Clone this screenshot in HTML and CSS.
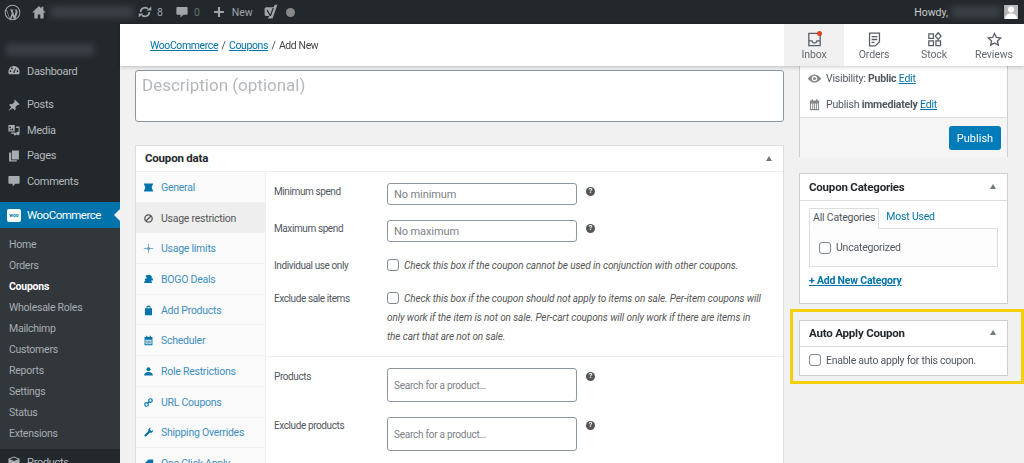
FILE: index.html
```html
<!DOCTYPE html>
<html lang="en">
<head>
<meta charset="utf-8">
<title>Add New Coupon</title>
<link rel="stylesheet" href="styles.css">
</head>
<body>
<div class="page">
  <header class="adminbar">
    <svg class="ab-wp" viewBox="0 0 20 20"><circle cx="10" cy="10" r="8.600" fill="none" stroke="currentColor" stroke-width="1.200"/><path fill="currentColor" d="M3.400 7.200l3.600 9.800 2.100-5.900-1.300-3.700H6.800V6.500h4.400v.9h-1.100l2.200 6.300 1.100-3.500c.5-1.700-.2-2.600-.7-3.700h2.100c1.200 1.800 1.400 3.400.7 5.400l-2.500 7-.9.200-2-5.400-1.900 5.400-.9-.2L2.400 7.200z"/></svg>
    <svg class="ab-home" viewBox="0 0 20 20"><path fill="currentColor" d="M10 2.500L1.500 10.500h2.700V18h4.200v-5h3.200v5h4.200v-7.500h2.700l-3-2.800V3.500h-2.400v2z"/></svg>
    <span class="blur ab-site"></span>
    <svg class="ab-update" viewBox="0 0 20 20"><path fill="none" stroke="currentColor" stroke-width="2.400" d="M3.800 10a6.200 6.200 0 0 1 10.600-4.400M16.200 10a6.200 6.200 0 0 1-10.600 4.400"/><path fill="currentColor" d="M12.500 8H19V2zM7.500 12H1v6z"/></svg>
    <span class="ab-num">8</span>
    <svg class="ab-comment" viewBox="0 0 20 20"><path fill="currentColor" d="M3 3h14a1 1 0 0 1 1 1v9a1 1 0 0 1-1 1h-5l-4 4v-4H3a1 1 0 0 1-1-1V4a1 1 0 0 1 1-1z"/></svg>
    <span class="ab-num ab-dim">0</span>
    <svg class="ab-plus" viewBox="0 0 20 20"><path fill="currentColor" d="M8.500 3h3v5.500H17v3h-5.500V17h-3v-5.500H3v-3h5.500z"/></svg>
    <span class="ab-new">New</span>
    <svg class="ab-yoast" viewBox="0 0 20 20"><path fill="currentColor" d="M4 4h9l2-3h3l-6 17H6l2-3H4a2 2 0 0 1-2-2V6a2 2 0 0 1 2-2z"/><path fill="#23282d" d="M5.500 7l3.500 6 3-8h1.500L10 15H8.500L4.500 8z"/></svg>
    <span class="ab-dot"></span>
    <span class="ab-spacer"></span>
    <span class="ab-howdy">Howdy,</span>
    <span class="blur ab-user"></span>
    <span class="ab-avatar"><svg viewBox="0 0 14 14"><circle cx="7" cy="4.500" r="3" fill="#fff"/><path fill="#fff" d="M1 14c0-4 2.500-5.500 6-5.500s6 1.500 6 5.500z"/></svg></span>
  </header>

  <div class="shell">
    <nav class="sidebar">
      <div class="brand"><span class="blur brand-blur"></span></div>
      <a class="menu-item menu-first"><svg viewBox="0 0 20 20"><path fill="currentColor" d="M10 3a8 8 0 0 0-7.200 11.500h14.400A8 8 0 0 0 10 3zm-5 8.500a1.200 1.200 0 1 1 0-2.400 1.200 1.200 0 0 1 0 2.400zm2-4a1.200 1.200 0 1 1 0-2.400 1.200 1.200 0 0 1 0 2.400zM10.500 13a1.500 1.500 0 0 1-1.400-2l3-5 .8.400-2 5.200c.3.900-.1 1.400-.4 1.400zm4.500-1.500a1.200 1.200 0 1 1 0-2.400 1.200 1.200 0 0 1 0 2.400z"/></svg>Dashboard</a>
      <div class="menu-sep"></div>
      <a class="menu-item"><svg viewBox="0 0 20 20"><path fill="currentColor" d="M11 2l7 7-1.500 1-1-.5-3.500 3.500.5 3-1.500 1.500-3-3L3 18l-.5-.5 3.500-4.500-3-3 1.500-1.500 3 .5L11 5.500l-.5-1z"/></svg>Posts</a>
      <a class="menu-item"><svg viewBox="0 0 20 20"><path fill="currentColor" d="M2 3h9v9H2zm2.500 2a1.200 1.200 0 1 0 0 2.400 1.200 1.200 0 0 0 0-2.400zM3.500 10.500h6L8 7.500l-2 2-1-1zM13 5h5v10a2.500 2.500 0 1 1-1.500-2.200V7H13zM6 13.500h5a2 2 0 1 1-1 3.700 3 3 0 0 1-.2-1.700H6z"/></svg>Media</a>
      <a class="menu-item"><svg viewBox="0 0 20 20"><path fill="currentColor" d="M7 2h10v13H7zM3 5h3v11h8v2H3z"/></svg>Pages</a>
      <a class="menu-item"><svg viewBox="0 0 20 20"><path fill="currentColor" d="M3 3h14a1 1 0 0 1 1 1v9a1 1 0 0 1-1 1h-5l-4 4v-4H3a1 1 0 0 1-1-1V4a1 1 0 0 1 1-1z"/></svg>Comments</a>
      <a class="menu-item menu-woo"><span class="woo-logo">woo</span>WooCommerce<span class="menu-arrow"></span></a>
      <ul class="submenu">
        <li>Home</li><li>Orders</li><li class="sub-active">Coupons</li><li>Wholesale Roles</li><li>Mailchimp</li><li>Customers</li><li>Reports</li><li>Settings</li><li>Status</li><li>Extensions</li>
      </ul>
      <a class="menu-item menu-products"><svg viewBox="0 0 20 20"><path fill="currentColor" d="M10 2l8 3.500v9L10 18l-8-3.500v-9zM4 6l6 2.500L16 6l-6-2.500z"/></svg>Products</a>
    </nav>

    <div class="main">
      <div class="wc-header">
        <div class="crumbs"><a>WooCommerce</a><span class="crumb-sep">/</span><a>Coupons</a><span class="crumb-sep">/</span><span>Add New</span></div>
        <div class="wc-tabs">
          <div class="wc-tab wc-tab-on"><span class="wc-dot"></span><svg viewBox="0 0 24 24"><path fill="none" stroke="currentColor" stroke-width="1.800" d="M4 3.500h16v17H4zM4 14h4.500c.5 2 1.800 3 3.500 3s3-1 3.500-3H20"/></svg>Inbox</div>
          <div class="wc-tab"><svg viewBox="0 0 24 24"><path fill="none" stroke="currentColor" stroke-width="1.800" d="M5 3h14v12l-6 6H5zM8 8h8M8 12h8M8 16h4"/></svg>Orders</div>
          <div class="wc-tab"><svg viewBox="0 0 24 24"><path fill="none" stroke="currentColor" stroke-width="1.800" d="M4 4h6.500v6.500H4zM4 14h6.500v6.500H4zM14 14h6.500v6.500H14zM17.200 2.500l4 4.700-4 4.700-4-4.700z"/></svg>Stock</div>
          <div class="wc-tab"><svg viewBox="0 0 24 24"><path fill="none" stroke="currentColor" stroke-width="1.800" d="M12 3.500l2.600 5.600 6.100.7-4.500 4.200 1.200 6-5.400-3-5.400 3 1.200-6-4.500-4.200 6.100-.7z"/></svg>Reviews</div>
        </div>
      </div>

      <div class="content">
        <div class="col-main">
          <textarea class="desc" placeholder="Description (optional)"></textarea>
          <section class="coupon-box">
            <div class="box-head coupon-head"><h2>Coupon data</h2><span class="caret"></span></div>
            <div class="coupon-body">
              <ul class="tabs">
                <li><svg viewBox="0 0 14 14"><path fill="#0073aa" d="M1 2h12l-2 5 2 5H1l2-5z"/></svg>General</li>
                <li class="tab-on"><svg viewBox="0 0 14 14"><circle cx="7" cy="7" r="4.700" fill="none" stroke="#555" stroke-width="1.700"/><path stroke="#555" stroke-width="1.700" d="M3.800 10.200l6.400-6.400"/></svg>Usage restriction</li>
                <li><svg viewBox="0 0 14 14"><path stroke="#5b9dc9" stroke-width="1" d="M7 1v12M1 7h12"/><path stroke="#5b9dc9" stroke-width="2" d="M7 5v4M5 7h4"/></svg>Usage limits</li>
                <li><svg viewBox="0 0 14 14"><path fill="#0073aa" d="M3 2l6-1 3 3-2 1.500H12l1 2.500-3 .5 2 3H2l-1-1 2-2-1-2 3-1z"/></svg>BOGO Deals</li>
                <li><svg viewBox="0 0 14 14"><path fill="#0073aa" d="M2.500 4H4.500V2.500a1.500 1.500 0 0 1 1.500-1.500h2a1.500 1.500 0 0 1 1.500 1.500V4h2v9h-9zM5.500 4h3V2.500h-3z"/></svg>Add Products</li>
                <li><svg viewBox="0 0 14 14"><path fill="#0073aa" d="M2 2.500h2V1h1.500v1.500h3V1H10v1.500h2V13H2zM3.200 6v5.800h7.600V6z"/><path fill="#79aecd" d="M4 7h6v4H4z"/></svg>Scheduler</li>
                <li><svg viewBox="0 0 14 14"><circle cx="7" cy="4" r="2.500" fill="#0073aa"/><path fill="#0073aa" d="M1.500 12c0-3 2-4.500 5.500-4.500s5.500 1.500 5.500 4.500z"/></svg>Role Restrictions</li>
                <li><svg viewBox="0 0 14 14"><g fill="none" stroke="#0073aa" stroke-width="1.500"><circle cx="4.500" cy="9.500" r="2.300"/><circle cx="9.500" cy="4.500" r="2.300"/><path d="M6 8l2-2"/></g></svg>URL Coupons</li>
                <li><svg viewBox="0 0 14 14"><path fill="#0073aa" d="M13 3.500a3.500 3.500 0 0 1-4.500 3.800L3.500 12.500 1.500 10.500 6.700 5.500A3.500 3.500 0 0 1 10.500 1L8.500 3 11 5.500z"/></svg>Shipping Overrides</li>
                <li><svg viewBox="0 0 14 14"><path fill="#0073aa" d="M1 13V8l6-6h6v5l-6 6z"/></svg>One Click Apply</li>
              </ul>
              <div class="panel">
                <div class="group">
                  <div class="field"><label>Minimum spend</label><input class="text" placeholder="No minimum"><span class="help">?</span></div>
                  <div class="field"><label>Maximum spend</label><input class="text" placeholder="No maximum"><span class="help">?</span></div>
                  <div class="field field-check"><label>Individual use only</label><p><input type="checkbox" class="check"><em>Check this box if the coupon cannot be used in conjunction with other coupons.</em></p></div>
                  <div class="field field-check field-long"><label>Exclude sale items</label><p><input type="checkbox" class="check"><em>Check this box if the coupon should not apply to items on sale. Per-item coupons will only work if the item is not on sale. Per-cart coupons will only work if there are items in the cart that are not on sale.</em></p></div>
                </div>
                <div class="group group-products">
                  <div class="field"><label>Products</label><input class="text text-search" placeholder="Search for a product…"><span class="help">?</span></div>
                  <div class="field"><label>Exclude products</label><input class="text text-search" placeholder="Search for a product…"><span class="help">?</span></div>
                </div>
              </div>
            </div>
          </section>
        </div>

        <aside class="col-side">
          <section class="box publish">
            <div class="pub-rows">
              <p class="pub-row"><svg class="pub-eye" viewBox="0 0 20 20"><path fill="#82878c" d="M10 4.500c4 0 7 3 9 5.500-2 2.500-5 5.500-9 5.500S3 12.500 1 10c2-2.500 5-5.500 9-5.500zm0 1.800a3.700 3.700 0 1 0 0 7.400 3.700 3.700 0 0 0 0-7.400zm0 1.700a2 2 0 1 1 0 4 2 2 0 0 1 0-4z"/></svg><span>Visibility: <b>Public</b> <a>Edit</a></span></p>
              <p class="pub-row"><svg class="pub-cal" viewBox="0 0 20 20"><path fill="#82878c" d="M3 4h2.500V2h2v2h5V2h2v2H17v15H3zm1.500 4.500V17h2V8.500zm3.500 0V17h1.500V8.500zm3 0V17h1.500V8.500zm3 0V17h1.500V8.500z"/></svg><span>Publish <b>immediately</b> <a>Edit</a></span></p>
            </div>
            <div class="pub-foot"><button class="btn-publish">Publish</button></div>
          </section>

          <section class="box">
            <div class="box-head"><h2>Coupon Categories</h2><span class="caret"></span></div>
            <div class="cat-body">
              <div class="cat-tabs"><span class="cat-tab-on">All Categories</span><a>Most Used</a></div>
              <div class="cat-list"><label><input type="checkbox" class="check">Uncategorized</label></div>
              <a class="cat-add">+ Add New Category</a>
            </div>
          </section>

          <div class="highlight">
            <section class="box">
              <div class="box-head"><h2>Auto Apply Coupon</h2><span class="caret"></span></div>
              <label class="auto-row"><input type="checkbox" class="check">Enable auto apply for this coupon.</label>
            </section>
          </div>
        </aside>
      </div>
    </div>
  </div>
</div>
</body>
</html>
```
FILE: styles.css
```css
* { box-sizing: border-box; }
html, body { margin: 0; padding: 0; height: 100%; overflow: hidden; }
body { font-family: Roboto, sans-serif; font-size: 11px; color: #50575e; background: #f1f1f1; }
p, ul, h2 { margin: 0; padding: 0; }
ul { list-style: none; }
svg { display: block; flex: none; }
.page { width: 1024px; height: 463px; display: flex; flex-direction: column; overflow: hidden; filter: blur(0.3px); }
.blur { display: block; filter: blur(3px); }

.adminbar { height: 24px; flex: none; background: #23282d; color: #a0a5aa; display: flex; align-items: center; padding-left: 4px; font-size: 10.500px; }
.ab-wp { width: 17px; height: 17px; }
.ab-home { width: 16px; height: 16px; margin-left: 10px; }
.ab-site { width: 84px; height: 12px; background: #3a3f44; margin-left: 3px; }
.ab-update { width: 14px; height: 14px; margin-left: 4px; }
.ab-num { margin-left: 5px; }
.ab-dim { color: #6b7075; margin-left: 5px; }
.ab-comment { width: 14px; height: 14px; margin-left: 12px; }
.ab-plus { width: 14px; height: 14px; margin-left: 12px; }
.ab-new { margin-left: 6px; }
.ab-yoast { width: 16px; height: 16px; margin-left: 10px; }
.ab-dot { width: 9px; height: 9px; border-radius: 50%; background: #888; margin-left: 7px; }
.ab-spacer { flex: 1; }
.ab-howdy { color: #ccc; }
.ab-user { width: 50px; height: 12px; background: #3a3f44; margin-left: 3px; }
.ab-avatar { width: 14px; height: 14px; background: #bbb; margin: 0 6px 0 3px; overflow: hidden; }

.shell { flex: 1; display: flex; min-height: 0; }
.sidebar { width: 120px; flex: none; background: #23282d; color: #b4b9be; font-size: 11px; letter-spacing: -.3px; display: flex; flex-direction: column; overflow: hidden; }
.brand { height: 35px; flex: none; padding: 20px 6px 0; }
.brand-blur { width: 88px; height: 12px; background: #3a4046; }
.menu-item { display: flex; align-items: center; height: 25.500px; flex: none; padding-left: 7px; gap: 6px; }
.menu-item svg { width: 14px; height: 14px; color: #a7acb1; }
.menu-first { height: 24px; }
.menu-sep { height: 9px; flex: none; }
.menu-woo { position: relative; height: 26px; margin-top: 8px; background: #0073aa; color: #fff; font-size: 11.500px; letter-spacing: -.5px; }
.woo-logo { width: 14px; height: 13px; background: #fff; border-radius: 2px; color: #0073aa; font-size: 5px; font-weight: 700; line-height: 12px; text-align: center; flex: none; letter-spacing: 0; }
.menu-arrow { position: absolute; right: 0; top: 7px; border: 6px solid transparent; border-right-color: #f1f1f1; border-left-width: 0; }
.submenu { background: #32373c; padding: 5.500px 0 5.500px 9px; flex: none; font-size: 10.500px; letter-spacing: -.25px; color: #a8adb2; }
.submenu li { height: 21px; line-height: 21px; }
.sub-active { color: #fff; font-weight: 700; }
.menu-products { background: #23282d; height: 26px; }

.main { flex: 1; min-width: 0; display: flex; flex-direction: column; }
.wc-header { height: 42px; flex: none; background: #fff; display: flex; justify-content: space-between; position: relative; z-index: 2; box-shadow: 0 1px 4px rgba(0,0,0,.22); }
.crumbs { padding-left: 30px; display: flex; align-items: center; gap: 3.500px; font-size: 10.500px; letter-spacing: -.4px; color: #444; }
.crumbs a { color: #0073aa; text-decoration: underline; }
.wc-tabs { display: flex; }
.wc-tab { width: 60px; display: flex; flex-direction: column; align-items: center; padding-top: 7px; font-size: 10.500px; letter-spacing: -.1px; line-height: 14px; color: #646970; position: relative; }
.wc-tab svg { width: 17px; height: 17px; color: #555d66; }
.wc-tab-on { background: #f0f0f0; }
.wc-dot { position: absolute; top: 7px; left: 33px; width: 5px; height: 5px; background: #e2401c; border-radius: 50%; }

.content { flex: 1; min-height: 0; overflow: hidden; display: flex; gap: 15px; padding-left: 15px; }
.col-main { width: 649px; flex: none; padding-top: 4px; }
.desc { display: block; width: 100%; height: 52px; margin: 0; padding: 2px 6px; border: 1px solid #8d96a0; border-radius: 3px; background: #fff; font: 17px/24px Roboto, sans-serif; resize: none; }
.desc::placeholder { color: #b5b8bb; }
.coupon-box { margin-top: 23px; background: #fff; border: 1px solid #ddd; height: 330px; }
.box-head { height: 27px; display: flex; align-items: center; justify-content: space-between; padding: 0 9px 1px; border-bottom: 1px solid #ddd; background: #fff; }
.coupon-head { height: 26px; border-bottom-color: #eee; }
.box-head h2 { font-size: 11.500px; letter-spacing: -.2px; font-weight: 700; color: #23282d; }
.caret { width: 0; height: 0; border: 3.500px solid transparent; border-top-width: 0; border-bottom: 5px solid #72777c; margin-right: 2px; }
.coupon-body { display: flex; }
.tabs { width: 129px; flex: none; background: #fafafa; }
.tabs li { height: 30.700px; display: flex; align-items: center; gap: 7px; padding: 1px 0 0 7px; border-bottom: 1px solid #f1f1f1; color: #3d8fbe; font-size: 10.500px; letter-spacing: -.25px; }
.tabs svg { width: 11px; height: 11px; }
.tabs .tab-on { background: #eee; color: #555; }
.panel { flex: 1; min-width: 0; border-left: 1px solid #eee; }
.group { padding: 11px 0 0 8px; }
.group-products { border-top: 1px solid #eee; }
.group:first-child { height: 184px; }
.field { display: flex; align-items: flex-start; margin-bottom: 15px; }
.field label { width: 113px; flex: none; font-size: 10px; letter-spacing: -.4px; line-height: 18px; }
.text { width: 190px; height: 22px; flex: none; padding: 0 6px; border: 1px solid #8d96a0; border-radius: 3px; background: #fff; font: 11px Roboto, sans-serif; letter-spacing: -.1px; }
.text::placeholder { color: #7c8186; }
.text-search { height: 34px; font-size: 10px; letter-spacing: -.25px; }
.help { width: 9px; height: 9px; margin: 4px 0 0 9px; border-radius: 50%; background: #555; color: #fff; font-size: 7px; line-height: 9px; font-weight: 700; text-align: center; }
.field-check { margin-bottom: 14.500px; margin-top: -1px; }
.field-check label { line-height: 19px; }
.field-check p { width: 380px; font-size: 10px; letter-spacing: -.1px; line-height: 19px; color: #555; }
.field-long p { width: 378px; }
.check { appearance: none; -webkit-appearance: none; width: 12px; height: 12px; margin: 0 5px 0 0; border: 1px solid #7e8993; border-radius: 3px; background: #fff; vertical-align: -2px; }

.col-side { width: 209px; flex: none; display: flex; flex-direction: column; gap: 16px; font-size: 10.500px; letter-spacing: -.2px; }
.box { background: #fff; border: 1px solid #ccd0d4; flex: none; }
.publish { height: 91px; border-top: 0; display: flex; flex-direction: column; }
.pub-rows { flex: 1; padding: 0 7px; }
.pub-row { display: flex; align-items: center; gap: 4px; height: 25.500px; white-space: pre; }
.pub-eye { width: 15px; height: 15px; }
.pub-cal { width: 13px; height: 13px; margin: 0 1px; }
.pub-row a, .cat-tabs a { color: #0073aa; }
.pub-row a { text-decoration: underline; }
.pub-foot { height: 40px; flex: none; background: #f5f5f5; border-top: 1px solid #ddd; display: flex; justify-content: flex-end; padding: 8px 6px 0 0; }
.btn-publish { width: 52px; height: 24px; padding: 0; border: 0; border-radius: 3px; background: #007cba; color: #fff; font: 11px Roboto, sans-serif; }
.cat-body { padding: 7px 9px 0; height: 102px; }
.cat-tabs { display: flex; align-items: flex-start; height: 20px; gap: 7px; line-height: 18px; }
.cat-tab-on { height: 21px; padding: 0 3px; line-height: 17px; border: 1px solid #ddd; border-bottom-color: #fdfdfd; background: #fdfdfd; position: relative; z-index: 1; color: #50575e; }
.cat-list { height: 39px; border: 1px solid #ddd; background: #fdfdfd; padding: 12px 9px; }
.cat-list label, .auto-row { display: flex; align-items: center; }
.cat-add { display: block; margin-top: 7px; color: #0073aa; font-weight: 700; text-decoration: underline; }
.highlight { margin: -11px -16px 0 -9px; padding: 8px 13px 5px 6px; border: 3px solid #f5cf0a; }
.highlight .box-head { height: 26px; padding-bottom: 2px; }
.auto-row { height: 28px; padding: 0 0 2px 9px; letter-spacing: -.25px; }
```
